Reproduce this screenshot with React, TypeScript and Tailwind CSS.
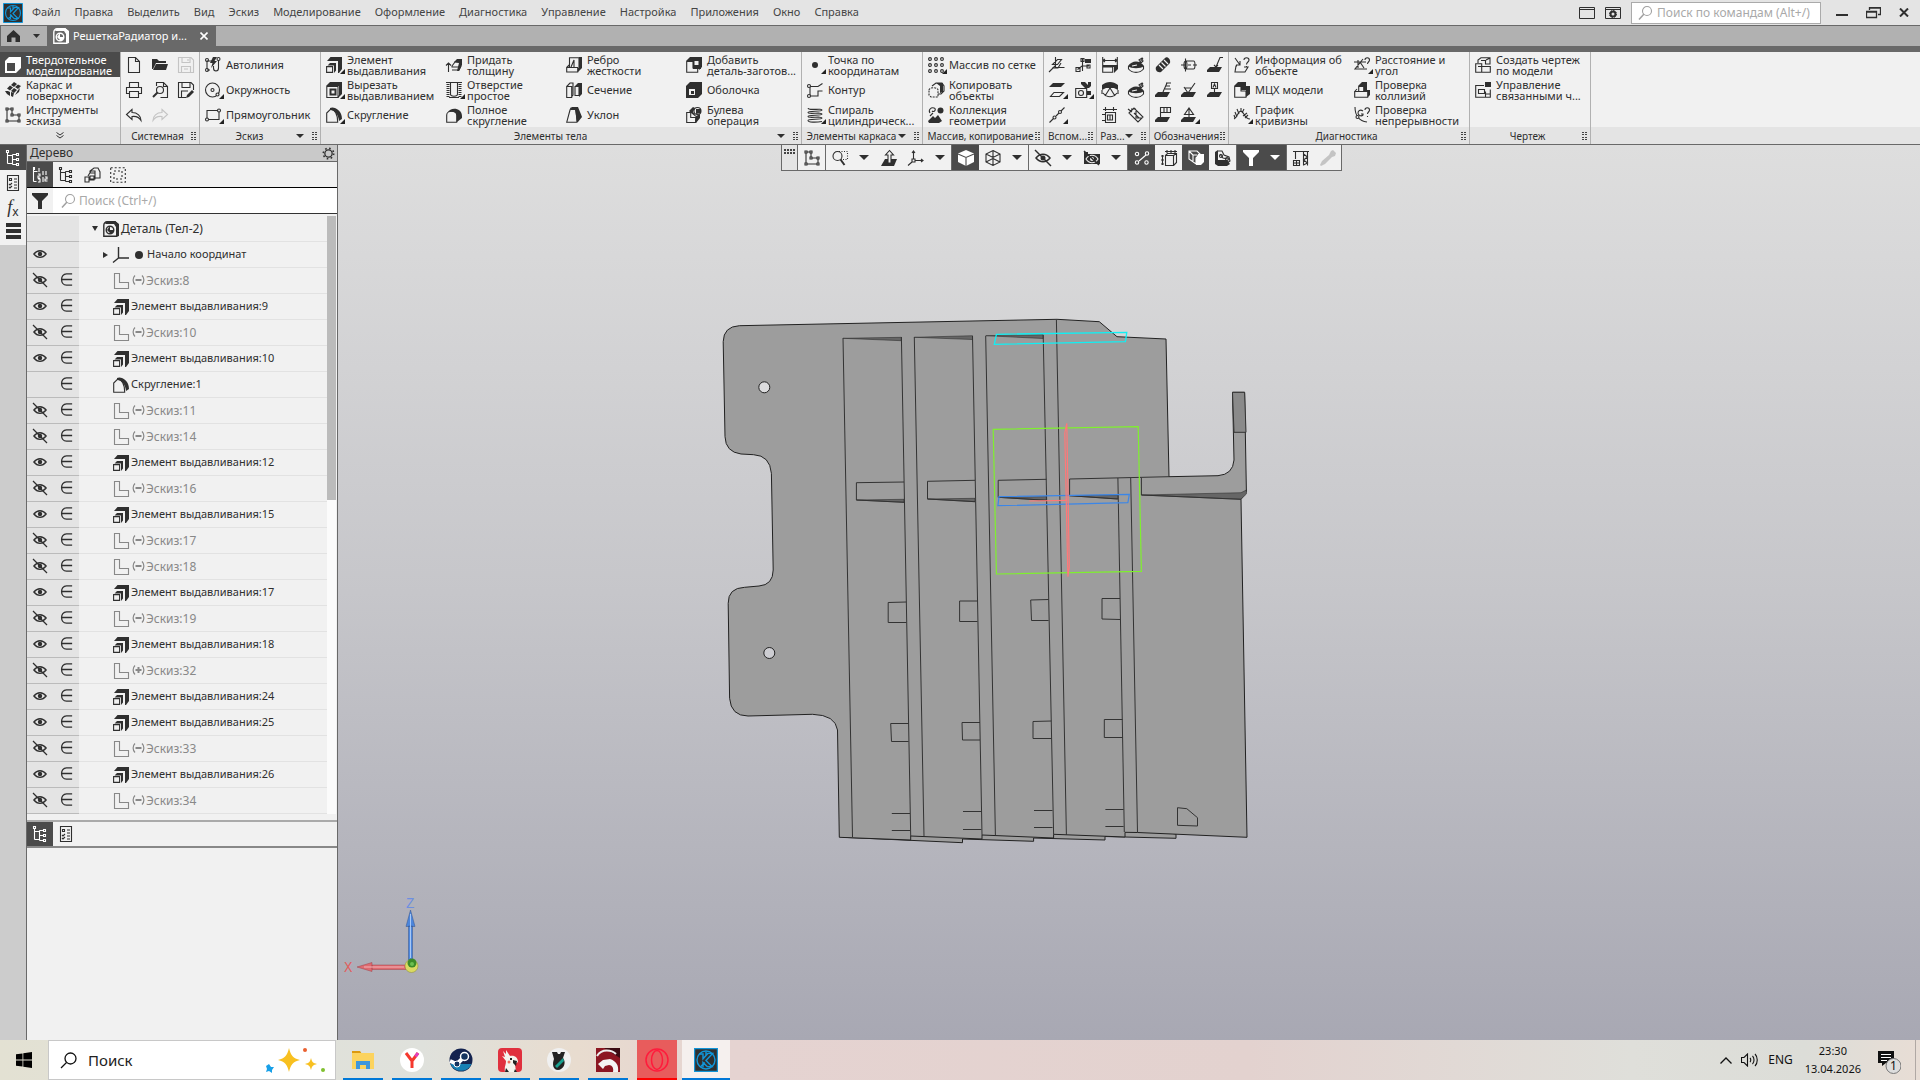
import type { ReactNode } from "react";

const F = { fill: "currentColor", stroke: "none" };

const icons: Record<string, ReactNode> = {
    solid: (
        <>
            <path {...F} d="M0 4L4 0h12v11l-5 5H0z" />
            <path fill="#4b4b4b" stroke="none" d="M2 6h8v8H2z" />
        </>
    ),
    surface: (
        <path
            {...F}
            d="M9 0l3 2-3 3-3-2zM13 2.500l3 1.500-3 3-3-2zM5 3.500l3 2-3 3-3-2zM9 6l3 2-3 3-3-2zM3 9l2 1v4l-3-2-2-3zM6 10l3 1-1 4-2-1zM13 8l2-2-1 4-4 3z"
        />
    ),
    sketch: (
        <>
            <path d="M2 2h5v6h7v6H2z" />
            <path fill="#f1f1f1" d="M1 1h2v2H1zM6 1h2v2H6zM6 7h2v2H6zM13 7h2v2h-2zM13 13h2v2h-2zM1 13h2v2H1z" />
        </>
    ),
    file: <path d="M2.500.5h7l4 4v11h-11zM9.500.5v4h4" />,
    open: <path {...F} d="M0 2h5l2 2h7v2H4L1 12H0zM4 7h12l-2 6H1z" />,
    save: <path d="M.5.500H13l2.500 2.500v12.500H.5zM4 .5v5h8v-5M10 2v2M3.500 15.500v-6h9v6M6 12h4" />,
    print: <path d="M3.500 5V.5h9V5M3.500 11.500h-3V5.500h15v6h-3M3.500 9.500h9v6h-9z" />,
    preview: (
        <>
            <path d="M4.500 4V.5h7l4 4v11h-7M11.500.5v4h4" />
            <circle cx="8" cy="8" r="3.500" />
            <path strokeWidth="2" d="M5.500 10.500L1 15" />
        </>
    ),
    saveAs: (
        <>
            <path d="M8 15.500H.5V.5H13l2.500 2.500V8M4 .5v5h8v-5M3.500 15v-6H10" />
            <path {...F} d="M14 8l2 2-5 5-3 1 1-3z" />
        </>
    ),
    undo: <path d="M6 2.500L.5 7.500l5.500 5v-3c4-.5 7 .5 9 4C15 9 11.500 5.500 6 5.500z" />,
    redo: <path d="M10 2.500l5.500 5-5.500 5v-3c-4-.5-7 .5-9 4C1 9 4.500 5.500 10 5.500z" />,
    autoline: (
        <>
            <path d="M2 12V4h5M13.500 3v8c0 4-5 4-5 0V9M2 13h3" />
            <path {...F} d="M8 0h4L9.500 4H12l-6 7 1.500-5H5z" />
            <circle cx="2" cy="3" r="1.500" />
            <circle cx="2" cy="13" r="1.500" />
            <circle cx="13.500" cy="2" r="1.500" />
        </>
    ),
    circle: (
        <>
            <circle cx="7.500" cy="8" r="7" />
            <circle cx="7.500" cy="8" r="1.500" />
            <circle cx="12.500" cy="12.500" r="1.500" fill="#f1f1f1" />
        </>
    ),
    rect: (
        <>
            <path d="M2 3.500h12v9H2z" />
            <circle cx="2" cy="12.500" r="1.500" fill="#f1f1f1" />
            <circle cx="14" cy="3.500" r="1.500" fill="#f1f1f1" />
        </>
    ),
    extrude: (
        <>
            <path {...F} d="M1 4l3.500-4H16v12l-3 4h-1V4z" />
            <path {...F} d="M1.500 8.500L4 6h6v7.500L8 16V8.500z" />
            <path d="M.6 9.600h6v5.800h-6z" />
        </>
    ),
    cut: (
        <>
            <path {...F} d="M0 4l4-4h12v12l-4 4v-2l1-1V4H1z" />
            <path d="M.8 4.500H12v11H.8z" />
            <path strokeWidth="2" d="M4.500 7.500h5v5h-5z" />
        </>
    ),
    fillet: (
        <>
            <path d="M.7 15.300V6l4-4c5 1 7 5 7 13.300z" />
            <path {...F} d="M4 1c4-2 12 2 12 11l-3 2C12 7 9 3 4 3z" />
        </>
    ),
    thicken: (
        <>
            <path d="M2.500 15V6M0 8.500L2.500 6 5 8.500M6 9l3-4h6l-2 5H6zM6 13h7l2-4" />
            <path {...F} d="M8 5l3-3h5v6l-3 6h-2l2-8z" />
        </>
    ),
    hole: (
        <>
            <path strokeDasharray="1 1" strokeWidth="3" d="M2 0v15M14 0v15" />
            <path d="M0 .5h16M4.500 1v11c0 3 7 3 7 0V1M3 15.500h10" />
        </>
    ),
    fullFillet: (
        <>
            <path d="M.7 15.300V8c0-5 10-5 10 0v7.300z" />
            <path {...F} d="M2 5c2-5 14-5 14 4v2l-5 4V9c0-4-5-5-9-4z" />
        </>
    ),
    rib: (
        <>
            <path d="M3.500 10V.7h9.500V10M.7 10.500h11v4.500H.7zM.7 10.500l3-3M8 10V3L5 10" />
            <path {...F} d="M13 0h3v11l-4 4v-4l1-1z" />
        </>
    ),
    section: (
        <>
            <path d="M.7 4.500h5v11h-5zM.7 4.500L4 1h3v12l-1.500 2M9 4.500h4v9H9z" />
            <path {...F} d="M9 4l3-3h4v11l-3 3V4z" />
        </>
    ),
    draft: (
        <>
            <path d="M.7 15.300L4 3l1-2h5l1 14.300z" />
            <path {...F} d="M4 3l2-3h6l4 10-4 5h-1L9 3z" />
        </>
    ),
    addPart: (
        <>
            <path {...F} d="M0 4l4-4h12v10l-3 3V4z" />
            <path {...F} d="M7 4h8v8H7z" />
            <path fill="#f1f1f1" stroke="none" d="M8.500 4h4v4h-4z" />
            <path d="M.7 4.500v10.800h11V11H7V4.500z" />
        </>
    ),
    shell: (
        <>
            <path {...F} fillRule="evenodd" d="M0 4l4-4h12v12l-4 4H0zm3 3v6h6V7z" />
            <path {...F} d="M5 9h3v3H5z" />
        </>
    ),
    boolean: (
        <>
            <path {...F} d="M3 4l4-4 2 1-2 4 3 4 4-2v4l-4 5-1-2 1-4-5-4z" />
            <circle cx="11.500" cy="4" r="3.500" />
            <path {...F} d="M10 2h5v4l-5 1z" />
            <path d="M.7 5.500h4v5h5v5h-9z" />
        </>
    ),
    point: <circle {...F} cx="8" cy="8" r="3" />,
    contour: (
        <>
            <path d="M15.500 1.500L11 4.500H3v9.500h8V9h4.500" />
            <circle cx="2" cy="4" r="1.500" fill="#f1f1f1" />
            <circle cx="2" cy="14" r="1.500" fill="#f1f1f1" />
        </>
    ),
    spiral: <path d="M1 1c0 3 14 0 14 2S1 3.500 1 5.500s14-.5 14 1.500S1 7.500 1 9.500s14-.5 14 1.500S1 11.500 1 13.500s8 2 14 1" />,
    grid: (
        <>
            {[2, 8, 14].map((x) =>
                [2, 8, 14].map((y) => <circle key={`${x}-${y}`} cx={x} cy={y} r="1.400" />)
            )}
        </>
    ),
    copy: (
        <>
            <path strokeDasharray="2 1" d="M1 8c0-3 9-3 9 0v7H3l-2-2z" />
            <path d="M4 4l4-3h6l2 3v5l-3 3h-3" />
            <path {...F} d="M8 1h7v9l-3 1V4z" />
        </>
    ),
    collection: (
        <>
            <path d="M2 6c-2-3 1-6 4-5s0 5-2 3M2 9l3-3" />
            <circle {...F} cx="12.500" cy="3.500" r="3" />
            <path {...F} d="M0 14l5-5 2 2 3-3 4 6-3 2H1z" />
        </>
    ),
    axisPlane: <path d="M6.500 0v11M0 15L7 8M7 10.500h8.500M3.500 7.500h5l4-5h-4zM3 11h6l3-5" />,
    coord: (
        <>
            <path d="M7.500 14V2M2.500 12.500L7 9h7M1 10.500h4v4H1zM6 1.500h3v3H6zM12 8h3v3h-3z" />
            <path {...F} d="M10 2h6v4h-6z" />
        </>
    ),
    planes: (
        <>
            <path {...F} d="M4 1h12l-4 4H0z" />
            <path d="M5 10.500h9.500l-4 4H1.500z" />
        </>
    ),
    body3: (
        <>
            <path {...F} d="M6 0h4l3 3V0h3v4l-2 2h-4L6 2zM12 9h4v4h-4z" />
            <path d="M.7 6.500h11v9H.7z" />
            <circle cx="6" cy="11" r="2.500" />
        </>
    ),
    lineDots: (
        <>
            <path d="M.5 15.500l4-4M7 9l3-3M12 4l3.500-3.500" />
            <circle cx="5.500" cy="10.500" r="1.500" />
            <circle cx="11" cy="5" r="1.500" />
        </>
    ),
    dimH: (
        <>
            <path d="M.7 0v15.300h10V10H.7M15.300 0v10M1 3.500h14M3 2L1 3.500 3 5M13 2l2 1.500L13 5" />
            <path {...F} d="M1 8h15v4l-4 4V10H1z" />
        </>
    ),
    dimR: (
        <>
            <path {...F} d="M0 9c4-6 12-6 16 0-3 3-13 3-16 0z" />
            <path d="M.5 9v3c4 4.500 11 4.500 15 0V9M9 9l6-8M11 3l3-2 1 3-2 2z" />
            <path stroke="#f1f1f1" d="M4 9l5-1" />
        </>
    ),
    dimA: (
        <>
            <path {...F} d="M0 3c5-4 11-4 16 0v5l-4-2H4L0 8z" />
            <path d="M8 6l-5 8M8 6l5 8M1 11c4 5 10 5 14 0M0 8v4M16 8v4" />
        </>
    ),
    dimL: <path d="M3.500 0v4M11.500 0v4M1 2.500h14M3.500 5.500h10v10h-10zM0 7.500h3M0 13.500h3M5.500 8h5v5h-5zM8 8v5" />,
    dimB: <path d="M1 6l5-5 9 9-5 5zM0 2l4 3M3 2h5M6 6l5 5M8 4v7h6" />,
    thread: (
        <>
            <path {...F} d="M1 10L10 1c2-2 6 1 5 5l-9 9c-4 1-6-2-5-5z" />
            <path stroke="#f1f1f1" d="M4 8l4 4M6.500 5.500l4 4M9 3l4 4" />
        </>
    ),
    cyl: <path d="M4.500 4h8c2 0 2 8 0 8h-8c-2 0-2-8 0-8zM4.500 4c2 0 2 8 0 8M0 8h4M7 8h3M12 8h4M4.500 1.500v13" />,
    mark: (
        <>
            <path {...F} d="M3 10h12l-3 5H0v-2z" />
            <path d="M16 .5h-3L9 10M7 8l2 2 2-2" />
        </>
    ),
    markE: (
        <>
            <path {...F} d="M3 10h12l-3 5H0v-2z" />
            <path d="M16 1H11M11 4h4M16 7H10M12 1L8 10" />
        </>
    ),
    markV: (
        <>
            <path {...F} d="M3 10h12l-3 5H0v-2z" />
            <path d="M3 5l4 6 7-10M4 6h6" />
        </>
    ),
    markA: (
        <>
            <path {...F} d="M3 10h12l-3 5H0v-2z" />
            <path d="M4.500.5h6v6h-6zM7.500 7v3M6 5.500L7.500 2 9 5.500" />
        </>
    ),
    markT: (
        <>
            <path {...F} d="M3 10h12l-3 5H0v-2z" />
            <path d="M5.500 10V.5h10v5h-10M9 .5v5M12 .5v5" />
        </>
    ),
    markD: (
        <>
            <path {...F} d="M3 10h12l-3 5H0v-2z" />
            <path d="M3.500 7.500h9L8 1zM8 2v8" />
        </>
    ),
    info: <path d="M1 1l5 7M6 4v4H2M3 9H2l-1 6h10l3-5h-4M10 3c0-3 5-3 5 0 0 2-2.500 2-2.500 4.500M12.500 9v1" />,
    mass: (
        <>
            <path {...F} d="M0 4l4-4h8v4h4v8l-4 3V8H7V4z" />
            <path d="M.7 4.500H7V9h5v6.300H.7z" />
        </>
    ),
    curvature: <path d="M0 12c3-1 4-8 7-8s3 8 9 8M1 11L0 8M3 10L1 5M5 7L3 2M7 5V1M8 6l2-4M9 9l4-3M11 11l3-3" />,
    distance: <path d="M0 5h4l8 0M4 3v8M9 2L1 12h12M6 5l4 6M11 3c0-3 4.500-3 4.500 0 0 2-2 2-2 4" />,
    collision: (
        <>
            <path {...F} d="M4 4l4-4h5v8h3v5l-2 2V9h-4V4z" />
            <path d="M.7 9.500h4v-5h5v5h4v5.800H.7zM5 9.500h5M.7 9.500L3 7" />
        </>
    ),
    continuity: (
        <>
            <path d="M1 0c0 8 4 14 12 15M9 4c-3-2-5 0-5 2s3 4 5 2V7H7M11 3c0-3 4.500-3 4.500 0 0 2-2 2-2 4M13.500 9v1" />
            <circle cx="3.500" cy="10" r="1.500" fill="#f1f1f1" />
        </>
    ),
    drawing: <path d="M.7 6.700h6v8.600h-6zM6.700 9.500h8.600v5.800H6.700M3 6V3l3-2.300h9V7h-4.500V3.500H6M11 3l4-2M3 9.500h4" />,
    linked: (
        <>
            <path d="M9 3.500H.7v11.800h14.600V7.500M3.500 7.500h6v4h-6zM10.500 9.500v6M10.500 12h5" />
            <path {...F} d="M10 0h6v5h-6z" />
        </>
    ),
    tree: <path d="M2.500 3v10.500M2.500 5.500h5M2.500 13.500h5M7.500 4.500v10M7.500 4.500h4M7.500 9.500h4M7.500 14.500h4M1.500.5h2v2h-2zM11.500 3.500h2v2h-2zM11.500 8.500h2v2h-2zM11.500 13.500h2v2h-2z" />,
    treeNum: <path d="M1.500 3v11.500M1.500 4.500h4M1.500 14.500h3M1.500.5h1v2h-1zM7 1v4M6 7h2v2H6v2h2M6 12h2v3H6M11 4v4M14 4v4M11 10v5M13 10h2v2h-2v2h2.500" />,
    params: <path d="M2.500.5h11v15h-11zM4.500 3.500h2v2h-2zM9 4h3M9 7h3M4 9l1 1 2-2M9 10h3M4 12l1 1 2-2M9 13h3" />,
    treeDocs: <path d="M6 6l0-2 4-3h4l2 4v6h-5V6H6M4 9l3-5h4v8H8M1 10h4v5H1zM5 12h4M6 9h4v4H6z" />,
    dashed: <path strokeDasharray="2 2" d="M.7.700h14.600v14.600H.7zM4 4h8v8H4z" />,
    filter: <path {...F} d="M0 0h16v2l-6 6v8H6V8L0 2z" />,
    search: (
        <>
            <circle cx="10" cy="6" r="4.500" />
            <path strokeWidth="1.500" d="M7 9l-5 5.500" />
        </>
    ),
    part: (
        <>
            <path strokeWidth="1.400" d="M.8 4.500c0-2 1-3.700 3.700-3.700H12l3.200 3v10l-2 1.400H.8z" />
            <path {...F} d="M4 0h8l4 3v12l-3 1V6l-2-3H2z" />
            <circle cx="7" cy="9" r="3.800" strokeWidth="1.400" />
            <path {...F} d="M7 5v4h4l-1 3H7L4 9z" />
        </>
    ),
    partLight: (
        <>
            <path strokeWidth="1.400" d="M.8 4.500c0-2 1-3.700 3.700-3.700H12l3.200 3v10l-2 1.400H.8z" />
            <path {...F} d="M4 0h8l4 3v12l-3 1V6l-2-3H2z" />
            <circle cx="7" cy="9" r="3.800" strokeWidth="1.400" />
            <path {...F} d="M7 5v4h4l-1 3H7L4 9z" />
        </>
    ),
    axes: <path strokeWidth="1.400" d="M5.500 0v11H16M5.500 11L0 15.500" />,
    sk: <path d="M1.500.5h5v9h9v6h-14z" />,
    eye: (
        <>
            <path strokeWidth="1.500" d="M1 8c4-5 10-5 14 0-4 5-10 5-14 0z" />
            <circle {...F} cx="8" cy="8" r="2.500" />
        </>
    ),
    eyeOff: (
        <>
            <path strokeWidth="1.500" d="M1 8c4-5 10-5 14 0-4 5-10 5-14 0z" />
            <circle {...F} cx="8" cy="8" r="2.500" />
            <path strokeWidth="1.400" d="M0 0l16 16" />
        </>
    ),
    member: <path strokeWidth="1.400" d="M14 2H8C1 2 1 14 8 14h6M3 8h11" />,
    gear: (
        <>
            <circle cx="8" cy="8" r="4.500" strokeWidth="1.600" />
            <circle cx="8" cy="8" r="6.400" strokeWidth="2" strokeDasharray="2 3.030" />
        </>
    ),
    zoomArea: (
        <>
            <path strokeDasharray="1 1.500" d="M7 1.500h8.500v8H9" />
            <circle cx="5.500" cy="6" r="4.500" />
            <path strokeWidth="2" d="M8.500 9.500l4 5.500" />
        </>
    ),
    normal: (
        <>
            <path {...F} d="M4 9h12l-3 7H0z" />
            <path fill="#f1f1f1" d="M7 13V5H4.500L8.500.500l4 4.500H10v8z" />
        </>
    ),
    axes3: <path d="M5.500 9V1M4 3l1.500-2L7 3M7 10.500h8M13 9l2 1.500-2 1.500M4 12l-4 3.500M4 9h3v3H4z" />,
    cube: (
        <>
            <path {...F} d="M8 0l8 3.500V12l-8 4-8-4V3.500z" />
            <path stroke="#4b4b4b" d="M0 4l8 3.500L16 4M8 7.500V16" />
        </>
    ),
    wire: <path d="M8 .5l7 3.500v8l-7 3.500L1 12V4zM1 4l7 3.500L15 4M8 7.500v8M8 .5v8L1 12M8 8.500L15 12" />,
    camera: (
        <>
            <path {...F} d="M0 2h4v2H0zM0 4h16v10H0z" />
            <path stroke="#f1f1f1" d="M2 9c3-5 9-5 12 0-3 5-9 5-12 0z" />
            <circle cx="8" cy="9" r="2" fill="#f1f1f1" stroke="none" />
            <path strokeWidth="1.500" d="M0 1l15 14" />
        </>
    ),
    points: (
        <>
            <path d="M5 11l7-6" />
            <circle cx="3" cy="4" r="1.700" />
            <circle cx="13" cy="3.500" r="1.700" />
            <circle cx="3" cy="12.500" r="1.700" />
            <circle cx="12.500" cy="12.500" r="1.700" />
        </>
    ),
    dims: <path d="M4.500 5.500h8v10h-8zM4.500 5.500l2-2h9v9l-3 3M12.500 5.500l3-2M6 0v3M10 0v3M14 0v3M4 1.500h12M0 6h3M0 10h3M0 14h3M1.500 5v10" />,
    bodies: (
        <>
            <path {...F} d="M8 9l2-5h6v8l-3 3H8z" />
            <path d="M1 1h8l3 3-4 4v6L1 9zM1 1l4 4v8M5 5h4" />
        </>
    ),
    corner: (
        <>
            <path {...F} d="M0 2l3-2v10h9l3 4-3 2H3l-3-2z" />
            <path d="M3 1h4l2 4 5 2 1 4-3 2M5 4l3 4 5 1" />
            <circle cx="6" cy="6" r="1.500" />
            <circle cx="12" cy="9" r="1.500" />
        </>
    ),
    crane: <path d="M2.500 1v8M0 1.500h16M.5 10.500h6v5h-6zM3.500 10.500v5M.5 13h6M10.500 1v14.500M14.500 1v14.500M10.500 4l4 3-4 3 4 3-4 2" />,
    dropper: <path {...F} d="M11 1l2-1 3 3-1 3-3 1-7 7-4 2-1-1 2-4 7-6z" />,
};

function Icon({ name, size = 16, className = "" }: { name: string; size?: number; className?: string }) {
    return (
        <svg
            width={size}
            height={size}
            viewBox="0 0 16 16"
            fill="none"
            stroke="currentColor"
            strokeWidth="1.100"
            className={`shrink-0 overflow-visible ${className}`}
            aria-hidden="true">
            {icons[name]}
        </svg>
    );
}

const Arrow = () => (
    <svg width="10" height="5" viewBox="0 0 10 5" className="shrink-0" aria-hidden="true">
        <path fill="currentColor" d="M0 0h10L5 5z" />
    </svg>
);

const Grip = () => (
    <svg width="5" height="9" viewBox="0 0 5 9" className="shrink-0" aria-hidden="true">
        <path fill="#444" d="M0 0h2v1H0zM3 0h2v1H3zM0 2h2v1H0zM3 2h2v1H3zM0 5h2v1H0zM3 5h2v1H3zM0 7h2v1H0zM3 7h2v1H3z" />
    </svg>
);

const KLogo = ({ size }: { size: number }) => (
    <svg width={size} height={size} viewBox="0 0 20 20" fill="none" aria-hidden="true" className="shrink-0">
        <path fill="#303030" stroke="#1295d8" d="M.5.500h19v19H.5z" />
        <circle cx="10" cy="10" r="7.500" stroke="#1295d8" strokeWidth="1.200" />
        <path stroke="#1295d8" strokeWidth="1.200" d="M4.500 5h3v4l4-4.500h4L10 10.500l5 5h-4L7.500 12v4M10 3v3M5 16l4-4" />
    </svg>
);

type Tool = { icon: string; text?: string[]; more?: boolean; off?: boolean };

const t = (icon: string, text: string, more = false): Tool => ({ icon, text: text.split("|"), more });
const s = (icon: string, more = false, off = false): Tool => ({ icon, more, off });

const groups: { label: string; arrow?: boolean; tools: Tool[] }[] = [
    {
        label: "Системная",
        tools: [s("file"), s("print"), s("undo"), s("open"), s("preview"), s("redo", false, true), s("save", false, true), s("saveAs")],
    },
    {
        label: "Эскиз",
        arrow: true,
        tools: [t("autoline", "Автолиния"), t("circle", "Окружность", true), t("rect", "Прямоугольник", true)],
    },
    {
        label: "Элементы тела",
        arrow: true,
        tools: [
            t("extrude", "Элемент|выдавливания", true),
            t("cut", "Вырезать|выдавливанием", true),
            t("fillet", "Скругление", true),
            t("thicken", "Придать|толщину"),
            t("hole", "Отверстие|простое", true),
            t("fullFillet", "Полное|скругление"),
            t("rib", "Ребро|жесткости"),
            t("section", "Сечение"),
            t("draft", "Уклон"),
            t("addPart", "Добавить|деталь-заготов..."),
            t("shell", "Оболочка"),
            t("boolean", "Булева|операция"),
        ],
    },
    {
        label: "Элементы каркаса",
        arrow: true,
        tools: [t("point", "Точка по|координатам", true), t("contour", "Контур"), t("spiral", "Спираль|цилиндрическ...", true)],
    },
    {
        label: "Массив, копирование",
        tools: [t("grid", "Массив по сетке", true), t("copy", "Копировать|объекты"), t("collection", "Коллекция|геометрии")],
    },
    {
        label: "Вспом...",
        tools: [s("axisPlane"), s("planes", true), s("lineDots", true), s("coord"), s("body3", true)],
    },
    {
        label: "Раз...",
        arrow: true,
        tools: [s("dimH"), s("dimA"), s("dimL"), s("dimR"), s("dimR"), s("dimB")],
    },
    {
        label: "Обозначения",
        tools: [s("thread"), s("markE"), s("markT"), s("cyl"), s("markV"), s("markD", true), s("mark"), s("markA")],
    },
    {
        label: "Диагностика",
        tools: [
            t("info", "Информация об|объекте"),
            t("mass", "МЦХ модели"),
            t("curvature", "График|кривизны", true),
            t("distance", "Расстояние и|угол", true),
            t("collision", "Проверка|коллизий"),
            t("continuity", "Проверка|непрерывности"),
        ],
    },
    {
        label: "Чертеж",
        tools: [t("drawing", "Создать чертеж|по модели"), t("linked", "Управление|связанными ч...")],
    },
];

const modes = [
    { icon: "solid", text: ["Твердотельное", "моделирование"] },
    { icon: "surface", text: ["Каркас и", "поверхности"] },
    { icon: "sketch", text: ["Инструменты", "эскиза"] },
];

const menu = [
    "Файл", "Правка", "Выделить", "Вид", "Эскиз", "Моделирование", "Оформление",
    "Диагностика", "Управление", "Настройка", "Приложения", "Окно", "Справка",
];

const rows = [
    "s-8", "e9", "s-10", "e10", "f1", "s-11", "s-14", "e12", "s-16", "e15", "s-17",
    "s-18", "e17", "s-19", "e18", "s+32", "e24", "e25", "s-33", "e26", "s-34",
];

const Lines = ({ text }: { text: string[] }) => (
    <span className="flex flex-col items-start whitespace-nowrap text-left leading-[11px]">
        {text.map((line) => (
            <span key={line}>{line}</span>
        ))}
    </span>
);

const MenuBar = () => (
    <header className="flex h-[26px] items-center border-b border-[#696969] bg-[#e4e4e4] pl-[3px] text-[#444]">
        <KLogo size={20} />
        <nav className="ml-[9px] flex gap-[14px] whitespace-nowrap">
            {menu.map((item) => (
                <button key={item}>{item}</button>
            ))}
        </nav>
        <div className="ml-auto flex items-center text-[#2f2f2f]">
            <button aria-label="Окно" className="mr-[10px]">
                <svg width="16" height="12" fill="none" stroke="currentColor">
                    <path d="M.5.500h15v11H.5zM.5 2.500h15" />
                </svg>
            </button>
            <button aria-label="Параметры окна" className="mr-[10px]">
                <svg width="16" height="12" fill="none" stroke="currentColor">
                    <path d="M.5.500h15v11H.5zM.5 2.500h15" />
                    <circle cx="8" cy="7" r="2.500" strokeWidth="2" />
                    <circle cx="8" cy="7" r="3.500" strokeDasharray="1.500 1.200" />
                </svg>
            </button>
            <label className="flex h-[22px] w-[190px] items-center border border-[#aaa] bg-white pl-[5px] text-xs text-[#a0a0a0]">
                <Icon name="search" />
                <input
                    aria-label="Поиск по командам"
                    placeholder="Поиск по командам (Alt+/)"
                    className="ml-1 w-full min-w-0 bg-transparent outline-none placeholder:text-[#a9a9a9]"
                />
            </label>
            <button aria-label="Свернуть" className="ml-[15px] flex h-5 w-[12px] items-center">
                <span className="mt-1 h-[2px] w-full bg-[#2f2f2f]" />
            </button>
            <button aria-label="Восстановить" className="ml-[18px]">
                <svg width="15" height="12" fill="none" stroke="currentColor">
                    <path d="M3.500 3V.5h11v7H12M.5 4.500h10v6H.5zM.5 5h10M3.500 1h11" strokeWidth="1.300" />
                </svg>
            </button>
            <button aria-label="Закрыть" className="ml-[18px] mr-[11px]">
                <svg width="10" height="9" stroke="currentColor" strokeWidth="2">
                    <path d="M1 .5l8 8M9 .5l-8 8" />
                </svg>
            </button>
        </div>
    </header>
);

const TabStrip = () => (
    <div className="flex h-[26px] border-b-6 border-[#696969] bg-[#b1b1b1]">
        <div className="flex w-12 items-center border-x border-[#696969] pl-[6px] text-[#2f2f2f]">
            <button aria-label="Главная">
                <svg width="13" height="12" viewBox="0 0 13 12" fill="currentColor">
                    <path d="M0 6L6.500 0 13 6v6H8.500V7.500h-4V12H0z" />
                </svg>
            </button>
            <button aria-label="Список документов" className="ml-[13px]">
                <svg width="7" height="4" fill="currentColor">
                    <path d="M0 0h7L3.500 4z" />
                </svg>
            </button>
        </div>
        <div className="flex w-[168px] items-center bg-[#696969] pl-[5px] text-white">
            <Icon name="partLight" />
            <span className="ml-1 whitespace-nowrap">РешеткаРадиатор и...</span>
            <button aria-label="Закрыть вкладку" className="ml-auto mr-2">
                <svg width="8" height="8" stroke="currentColor" strokeWidth="1.600">
                    <path d="M.5.500l7 7M7.500.500l-7 7" />
                </svg>
            </button>
        </div>
    </div>
);

const ToolButton = ({ tool }: { tool: Tool }) => (
    <button
        className={`relative flex h-[25px] items-center pl-[5px] ${tool.off ? "text-[#c4c4c4]" : ""} ${tool.text ? "w-[120px]" : "w-[26px]"}`}>
        <Icon name={tool.icon} />
        {tool.more && (
            <svg width="5" height="5" className="absolute bottom-[3px] left-[19px]" fill="#222">
                <path d="M5 0v5H0z" />
            </svg>
        )}
        {tool.text && (
            <span className="ml-[5px]">
                <Lines text={tool.text} />
            </span>
        )}
    </button>
);

const Ribbon = () => (
    <div className="flex h-[93px] border-b border-[#696969] bg-[#f1f1f1]">
        <div className="flex w-[121px] shrink-0 flex-col border-r border-[#b1b1b1]">
            {modes.map((m, i) => (
                <button
                    key={m.icon}
                    className={`flex h-[25px] items-center pl-[5px] ${i === 0 ? "bg-[#4b4b4b] text-white" : ""}`}>
                    <Icon name={m.icon} />
                    <span className="ml-[5px]">
                        <Lines text={m.text} />
                    </span>
                </button>
            ))}
            <button aria-label="Показать все наборы" className="flex flex-1 items-center justify-center bg-[#e4e4e4]">
                <svg width="8" height="7" fill="none" stroke="#333">
                    <path d="M.5.500L4 3 7.500.500M.5 3.500L4 6l3.500-2.500" />
                </svg>
            </button>
        </div>
        {groups.map((g) => (
            <section key={g.label} className="flex shrink-0 flex-col border-r border-[#b1b1b1]">
                <div className="grid h-[75px] grid-flow-col grid-rows-3 justify-start">
                    {g.tools.map((tool, i) => (
                        <ToolButton key={i} tool={tool} />
                    ))}
                </div>
                <div className="flex flex-1 items-center bg-[#e4e4e4] pr-[3px] pt-px text-[10px]">
                    <span className="w-0 flex-1 whitespace-nowrap pl-[3px] text-center">{g.label}</span>
                    {g.arrow && (
                        <svg width="8" height="4" fill="currentColor" className="mr-2 shrink-0">
                            <path d="M0 0h8L4 4z" />
                        </svg>
                    )}
                    <Grip />
                </div>
            </section>
        ))}
        <div className="flex flex-1 flex-col justify-end">
            <div className="h-[17px] bg-[#e4e4e4]" />
        </div>
    </div>
);

const SideRail = () => (
    <aside className="w-[27px] shrink-0 border-r border-[#696969] bg-[#ccc]">
        <div className="flex flex-col bg-[#f1f1f1]">
            <button aria-label="Дерево" className="flex h-[25px] items-center justify-center bg-[#4b4b4b] text-white">
                <Icon name="tree" />
            </button>
            <button aria-label="Параметры" className="flex h-[25px] items-center justify-center">
                <Icon name="params" />
            </button>
            <button aria-label="Переменные" className="flex h-[25px] items-center justify-center">
                <span className="font-['Liberation_Serif',serif] text-lg leading-none italic">
                    f<sub className="font-['Noto_Sans',sans-serif] text-xs not-italic">x</sub>
                </span>
            </button>
            <button aria-label="Список" className="flex h-[25px] flex-col items-center gap-[2px] pt-[3px]">
                <span className="h-1 w-[15px] bg-[#2f2f2f]" />
                <span className="h-1 w-[15px] bg-[#2f2f2f]" />
                <span className="h-1 w-[15px] bg-[#2f2f2f]" />
            </button>
        </div>
    </aside>
);

const TreeRow = ({ row }: { row: string }) => {
    const sketch = row[0] === "s";
    const extrude = row[0] === "e";
    return (
        <li className="flex h-[26px]">
            <div className="flex w-[52px] items-center border-b border-[#bbb] bg-[#e4e4e4] pb-[2px] pl-[6px]">
                <button aria-label="Видимость" className="h-[14px] w-[14px]">
                    {row[0] !== "f" && <Icon name={sketch ? "eyeOff" : "eye"} size={14} />}
                </button>
                <button aria-label="Включение" className="ml-3 h-[15px] w-[15px]">
                    <Icon name="member" size={15} />
                </button>
            </div>
            <div className={`flex flex-1 items-center whitespace-nowrap border-b border-[#e2e2e2] pl-[34px] ${sketch ? "text-[#888]" : ""}`}>
                <Icon name={sketch ? "sk" : extrude ? "extrude" : "fillet"} />
                {sketch ? (
                    <>
                        <svg width="13" height="11" fill="none" stroke="currentColor" className="ml-[3px] shrink-0">
                            <path strokeWidth="1.200" d="M3 .5c-2.500 2.500-2.500 6.500 0 9M10 .5c2.500 2.500 2.500 6.500 0 9" />
                            <path strokeWidth="2" d={row[1] === "+" ? "M3.500 5h6M6.500 2v6" : "M3.500 5h6"} />
                        </svg>
                        <span className="ml-px text-xs">Эскиз:{row.slice(2)}</span>
                    </>
                ) : (
                    <span className="ml-[2px]">
                        {extrude ? "Элемент выдавливания:" : "Скругление:"}
                        {row.slice(1)}
                    </span>
                )}
            </div>
        </li>
    );
};

const treeTabs = [
    { icon: "treeNum", label: "По порядку" },
    { icon: "tree", label: "Структура" },
    { icon: "treeDocs", label: "Связи" },
    { icon: "dashed", label: "Область" },
];

const TreePanel = () => (
    <section className="flex w-[311px] shrink-0 flex-col border-r border-[#696969] bg-[#f1f1f1]">
        <div className="flex h-[17px] items-center justify-between border-b border-[#696969] bg-[#c9c9c9] pl-[3px] pr-[2px]">
            <h2 className="text-xs">Дерево</h2>
            <button aria-label="Настройка панели">
                <Icon name="gear" size={13} />
            </button>
        </div>
        <div className="flex h-[26px] border-b border-black">
            {treeTabs.map((tab, i) => (
                <button
                    key={tab.icon}
                    aria-label={tab.label}
                    className={`flex w-[26px] items-center justify-center ${i === 0 ? "bg-[#4b4b4b] text-white" : ""}`}>
                    <Icon name={tab.icon} />
                </button>
            ))}
        </div>
        <div className="flex h-[26px] border-b border-[#333] bg-white">
            <button aria-label="Фильтр" className="flex w-[26px] items-center justify-center bg-[#f1f1f1]">
                <Icon name="filter" />
            </button>
            <label className="flex flex-1 items-center pl-[7px] text-xs text-[#a0a0a0]">
                <Icon name="search" />
                <input
                    aria-label="Поиск"
                    placeholder="Поиск (Ctrl+/)"
                    className="ml-[3px] w-full bg-transparent outline-none placeholder:text-[#a9a9a9]"
                />
            </label>
        </div>
        <div className="mt-[2px] flex">
            <ul className="min-w-0 flex-1">
                <li className="flex h-[26px]">
                    <div className="w-[52px] border-b border-[#bbb] bg-[#e4e4e4]" />
                    <div className="flex flex-1 items-center border-b border-[#e2e2e2] pl-[13px]">
                        <svg width="6" height="5" fill="currentColor">
                            <path d="M0 0h6L3 5z" />
                        </svg>
                        <Icon name="part" className="ml-[5px]" />
                        <span className="ml-[2px] text-xs">Деталь (Тел-2)</span>
                    </div>
                </li>
                <li className="flex h-[26px]">
                    <div className="flex w-[52px] items-center border-b border-[#bbb] bg-[#e4e4e4] pb-[2px] pl-[6px]">
                        <button aria-label="Видимость">
                            <Icon name="eye" size={14} />
                        </button>
                    </div>
                    <div className="flex flex-1 items-center border-b border-[#e2e2e2] pl-[24px]">
                        <svg width="5" height="6" fill="currentColor">
                            <path d="M0 0v6l5-3z" />
                        </svg>
                        <Icon name="axes" className="ml-[5px]" />
                        <span className="ml-[6px] h-2 w-2 rounded-full bg-[#2f2f2f]" />
                        <span className="ml-1">Начало координат</span>
                    </div>
                </li>
                {rows.map((row) => (
                    <TreeRow key={row} row={row} />
                ))}
            </ul>
            <div className="mr-px w-[9px] bg-[#fbfbfb]">
                <div className="h-[284px] bg-[#bbb]" />
            </div>
        </div>
        <div className="mt-[6px] flex h-[28px] border-y-2 border-t-[#aaa] border-b-[#888]">
            <button aria-label="Структура" className="flex w-[26px] items-center justify-center bg-[#4b4b4b] text-white">
                <Icon name="tree" />
            </button>
            <button aria-label="Свойства" className="flex w-[26px] items-center justify-center">
                <Icon name="params" />
            </button>
        </div>
    </section>
);

const ViewCell = ({ icon, dark, off }: { icon: string; dark?: boolean; off?: boolean }) => (
    <button
        aria-label={icon}
        className={`flex w-[27px] items-center justify-center ${dark ? "bg-[#4b4b4b] text-white" : ""} ${off ? "text-[#c4c4c4]" : ""}`}>
        <Icon name={icon} />
    </button>
);

const ViewArrow = ({ dark }: { dark?: boolean }) => (
    <button aria-label="Ещё" className={`flex w-[22px] items-center justify-center ${dark ? "bg-[#4b4b4b] text-white" : ""}`}>
        <Arrow />
    </button>
);

const Sep = () => <span className="w-px bg-[#696969]" />;

const ViewToolbar = () => (
    <div className="absolute left-[443px] top-0 flex h-[26px] border border-t-0 border-[#696969] bg-[#f1f1f1]">
        <div className="flex w-[15px] justify-center bg-[#e4e4e4] pt-1">
            <svg width="11" height="5" stroke="#444" strokeWidth="2" strokeDasharray="2 1">
                <path d="M0 1h11M0 4h11" />
            </svg>
        </div>
        <Sep />
        <ViewCell icon="sketch" />
        <Sep />
        <ViewCell icon="zoomArea" />
        <ViewArrow />
        <ViewCell icon="normal" />
        <ViewCell icon="axes3" />
        <ViewArrow />
        <Sep />
        <ViewCell icon="cube" dark />
        <ViewCell icon="wire" />
        <ViewArrow />
        <Sep />
        <ViewCell icon="eyeOff" />
        <ViewArrow />
        <ViewCell icon="camera" />
        <ViewArrow />
        <Sep />
        <ViewCell icon="points" dark />
        <ViewCell icon="dims" />
        <ViewCell icon="bodies" dark />
        <ViewCell icon="corner" />
        <Sep />
        <ViewCell icon="filter" dark />
        <ViewArrow dark />
        <Sep />
        <ViewCell icon="crane" />
        <ViewCell icon="dropper" off />
    </div>
);

const edges = [
    "M843 338L852.500 837", "M901.400 337L910.700 836", "M914.300 337L924 836.500", "M972.500 336L982 835",
    "M985.700 336L995.400 835.500", "M1043.200 335L1053.600 834", "M1056.400 320L1066.400 835",
    "M1117.900 478L1124.300 832", "M1130.700 478L1137.500 832.500",
];

const slots = [
    "M904 482L856.400 482.700V500L904 502.300", "M975 480.300L927.500 481.300V499L975 501.700",
    "M1046.400 479.300L998.200 480.300V497.300L1046.400 500.300", "M1169 476.700L1069.600 479V495.700L1117.900 499",
    "M1141.400 477.700V495L1241 499.300",
    "M906.400 602L888.200 602.500V622.500H906.400", "M977.500 601H959.600V621.500H977.500",
    "M1048.600 599.500L1030.700 600L1031.500 620.500H1048.600", "M1120 598.500H1102V619L1120 619.500",
    "M908.600 723.500H890.700L891.500 741.500H908.600", "M980 722.500H962L962.500 740H980",
    "M1051.400 721L1033 721.500V738.500H1051.400", "M1122.500 719.500H1104.300V737.500H1122.500",
    "M891.800 813.500H910M891.800 830.500H910", "M963 811.500H981.400M963 829.500H981.400",
    "M1034 810.500H1052.500M1034 827.500H1052.500", "M1105.400 809.500H1123.600M1105.400 826.500H1123.600",
    "M1177.500 807.700L1186.800 808.700L1197.500 817.700V826L1177.500 825.300z",
];

const slivers = [
    "M843 338.300L901.400 337.300V340.700z", "M914.300 337.300L972.500 335.700V339.500z", "M985.700 335.700L1043.200 334.700V338.500z",
    "M856.400 500L904 499.300V502.300z", "M927.500 499L975 498.300V501.700z", "M998.200 497.300L1046.400 496.600V500.300z",
    "M1069.600 495.700L1117.900 495V499z", "M1141.400 495L1241 492.700L1246.400 490V494L1241 499.300z",
];

const Model = () => (
    <svg
        width="560"
        height="560"
        viewBox="700 300 560 560"
        fill="none"
        className="absolute left-[362px] top-[155px]"
        aria-label="Деталь">
        <g fill="#9d9d9d" stroke="#222">
            <path d="M843 837.300L962.500 842.700V839L1033.600 841.300V838L1105 840V836.500L1176 838.300V834L1137 828H845z" />
            <path d="M723.200 341.700Q723.500 326.500 739.300 325.700L1057 319.300L1099.300 321.700L1117 336.700L1166 339L1169 476.700L1218 475.700Q1233 474.500 1234 460L1232.500 392.300H1244.600L1246.400 491.700L1241 499.300L1247 837.300L1137.500 832.500L1125 832.300V837L1053.600 834.300V838L982 835V839L910.700 836V840L839.300 837.300L837.500 730Q835.500 715 812.500 714.300L748 716Q731 716 729.600 698.300L728.200 603.300Q728 588 744.600 587.300L759 586Q773 585 773.200 570L771.400 473.300Q770 455.500 753.600 454.700L741 454Q725.500 452 725 436.700z" />
        </g>
        <path fill="#8a8a8a" stroke="#333" d="M1232.500 392.300H1244.600L1246 432.300H1234z" />
        <g fill="#666" stroke="#222" strokeWidth=".5">
            {slivers.map((d) => (
                <path key={d} d={d} />
            ))}
        </g>
        <g stroke="#333">
            {edges.concat(slots).map((d) => (
                <path key={d} d={d} />
            ))}
        </g>
        <circle cx="764.300" cy="387.300" r="5.500" fill="#dcdcde" stroke="#222" />
        <circle cx="769.300" cy="653" r="5.500" fill="#cdcdd2" stroke="#222" />
        <path stroke="#10f0f4" strokeWidth="1.300" d="M996.400 334.300L1126.800 332.300L1125.400 341.700L994.300 344.300z" />
        <path stroke="#7ff02e" strokeWidth="1.200" d="M993.200 429.300L1138.200 426.700L1141.400 571.300L996.400 574z" />
        <path stroke="#3b86e8" strokeWidth="1.200" d="M999 496.700L1129.300 494.300L1127.900 502.700L997.900 505.700z" />
        <path stroke="#ff7878" strokeWidth="1.200" d="M1066.800 423.300L1064.800 433L1067.900 576.700L1069.300 566.700zM1029.300 501L1067 500.300" />
    </svg>
);

const Gizmo = () => (
    <svg width="90" height="90" viewBox="338 895 90 90" className="absolute bottom-[55px] left-0" aria-hidden="true">
        <text x="406" y="908" fill="#6e8fe0" className="font-['Liberation_Mono',monospace] text-sm">Z</text>
        <text x="344" y="972" fill="#e06060" className="font-['Liberation_Mono',monospace] text-sm">X</text>
        <path fill="#4c86dc" stroke="#36548c" strokeWidth=".5" d="M408.500 926h4v34h-4zM410.500 910l4.500 16.500h-9z" />
        <path stroke="#a8c8f5" d="M410.500 914v44" />
        <path fill="#de6a70" stroke="#a04048" strokeWidth=".5" d="M372 965h34v4.500h-34zM357 967l15-4.500v9z" />
        <path stroke="#f3b4b8" d="M364 967h40" />
        <circle cx="411.500" cy="966" r="6.500" fill="#dada62" stroke="#8f8f30" strokeWidth=".5" />
        <circle cx="412" cy="963" r="4.500" fill="#3c8c28" />
        <circle cx="412" cy="964" r="2" fill="#6cc050" />
    </svg>
);

const apps: { name: string; art: ReactNode }[] = [
    {
        name: "Проводник",
        art: (
            <>
                <path fill="#dc9a10" d="M1 3h8l2 3H1z" />
                <path fill="#fcd35e" d="M1 5h22v16H1z" />
                <path fill="#3f97dc" d="M5 13h14v8h-4v-4H9v4H5z" />
            </>
        ),
    },
    {
        name: "Яндекс",
        art: (
            <>
                <circle cx="12" cy="12" r="12" fill="#fff" />
                <path fill="none" stroke="#f5382e" strokeWidth="3" d="M6 5l6 8 6-8M12 12v8" />
                <path fill="none" stroke="#e040c0" strokeWidth="3" d="M15.500 8.500L18 5" />
            </>
        ),
    },
    {
        name: "Steam",
        art: (
            <>
                <circle cx="12" cy="12" r="11.500" fill="#14234f" />
                <path fill="#1680b4" d="M1.500 16a11.500 11.500 0 0 0 21 0z" />
                <path stroke="#fff" strokeWidth="4" d="M1 13l7 3 6-6" fill="none" />
                <circle cx="15.500" cy="8.500" r="4" fill="#14335f" stroke="#fff" strokeWidth="1.500" />
                <circle cx="8" cy="16" r="3" fill="#14335f" stroke="#fff" />
            </>
        ),
    },
    {
        name: "Какаду",
        art: (
            <>
                <rect width="24" height="24" rx="4" fill="#e0303e" />
                <path fill="#f4f4ee" d="M5 3l3 3 0-4 4 6c5-1 8 2 8 6l-3 2 1 8H7c-1-5 1-7 1-11L4 8l3 1z" />
                <path fill="#222" d="M15 12l4 1-1 5-3-3zM12 10h2v2h-2zM7 24l1-4 3 4zM16 24l1-3 2 3z" />
                <circle cx="11" cy="14" r="1.500" fill="#f0705c" />
            </>
        ),
    },
    {
        name: "Маска",
        art: (
            <>
                <circle cx="12" cy="12" r="12" fill="#f0f0f0" />
                <path fill="#222" d="M5 4h5l1 2h2l1-2h4l-2 6c4 5 0 12-5 12-5 0-6-6-4-11z" />
                <path fill="#18a090" d="M8 18l8-8 1 3-7 7z" />
            </>
        ),
    },
    {
        name: "Дракон",
        art: (
            <>
                <path fill="#8c1622" d="M0 0h24v24H0z" />
                <path fill="#3c0c14" d="M8 0h16v10z" />
                <path fill="none" stroke="#eee" strokeWidth="2" d="M1 8C6 0 16 2 20 6" />
                <path fill="#f4f4f4" d="M2 16l5-4 7-1c6 2 9 6 8 13h-5c1-4-1-7-4-7l-4 1-2 3-2-2z" />
            </>
        ),
    },
    {
        name: "Opera",
        art: (
            <g fill="none" stroke="#ff1b3c" strokeWidth="1.500">
                <circle cx="12" cy="12" r="11" />
                <ellipse cx="12" cy="12" rx="5.500" ry="9.500" />
            </g>
        ),
    },
];

const Taskbar = () => (
    <footer className="flex h-10 items-stretch bg-[linear-gradient(90deg,#e3e1d3_0%,#dfe1dc_22%,#e8dccf_30%,#e5d3d1_38%,#e3d2cf_65%,#dfdfda_85%,#dcddd8_94%,#e8ddd5_100%)] text-[#111]">
        <button aria-label="Пуск" className="flex w-12 items-center justify-center">
            <svg width="16" height="16" fill="#000">
                <path d="M0 2.300L6.500 1.400v6.200H0zM7.300 1.300L16 0v7.600H7.300zM0 8.400h6.500v6.200L0 13.700zM7.300 8.400H16V16l-8.700-1.300z" />
            </svg>
        </button>
        <label className="flex w-[288px] items-center border border-[#c8c8c8] bg-white pl-[11px]">
            <svg width="17" height="17" fill="none" stroke="#111" strokeWidth="1.300" className="shrink-0">
                <circle cx="10.500" cy="6.500" r="5.500" />
                <path d="M6.500 10.500L1 16" />
            </svg>
            <input
                aria-label="Поиск в системе"
                placeholder="Поиск"
                className="ml-[11px] w-0 flex-1 bg-transparent text-[15px] outline-none placeholder:text-[#222]"
            />
            <svg width="62" height="26" className="mr-2 shrink-0" aria-hidden="true">
                <path fill="#f8c020" d="M24 1c2 8 4 10 11 12-7 2-9 4-11 12-2-8-4-10-11-12 7-2 9-4 11-12z" />
                <path fill="#f8c020" d="M46 11c1 4 2 5 6 6-4 1-5 2-6 6-1-4-2-5-6-6 4-1 5-2 6-6z" />
                <path fill="#18a0e8" d="M4 17l2 3 3 0-2 3 0 3-3-2-3 1 1-3-1-3z" />
                <circle cx="40" cy="3" r="2" fill="#ea6030" />
                <circle cx="58" cy="23" r="2" fill="#80c030" />
            </svg>
        </label>
        <nav className="ml-[2px] flex">
            {apps.map((app, i) => (
                <button key={app.name} aria-label={app.name} className="flex w-[49px] justify-center">
                    <span
                        className={`flex h-full w-10 items-center justify-center border-b-2 pt-[2px] ${i === 6 ? "border-[#f00] bg-[#e85c5c]" : "border-[#0078d7]"}`}>
                        <svg width="24" height="24" viewBox="0 0 24 24" aria-hidden="true">
                            {app.art}
                        </svg>
                    </span>
                </button>
            ))}
            <button
                aria-label="КОМПАС-3D"
                className="ml-px flex w-12 items-center justify-center border-b-2 border-[#0078d7] bg-[#f5f0ee] pt-[2px]">
                <KLogo size={24} />
            </button>
        </nav>
        <div className="ml-auto flex items-center text-xs">
            <button aria-label="Скрытые значки">
                <svg width="12" height="7" fill="none" stroke="#111" strokeWidth="1.300">
                    <path d="M.5 6.500L6 1l5.500 5.500" />
                </svg>
            </button>
            <button aria-label="Громкость" className="ml-[9px]">
                <svg width="17" height="14" fill="none" stroke="#111" strokeWidth="1.100">
                    <path d="M.5 4.500H3L6.500 1v12L3 9.500H.5zM9 5c1 1 1 3 0 4M11.500 3c2 2 2 6 0 8M14 1c3 3 3 9 0 12" />
                </svg>
            </button>
            <button className="ml-[10px]">ENG</button>
            <button className="ml-3 flex flex-col items-center text-[11px] leading-[18px]">
                <span>23:30</span>
                <span>13.04.2026</span>
            </button>
            <button aria-label="Уведомления" className="ml-4 flex h-full items-center border-r border-[#b0a8a4] pr-[14px] pt-1">
                <svg width="24" height="28" aria-hidden="true">
                    <path fill="#111" d="M1 3h16v12H9l-4 3v-3H1z" />
                    <path stroke="#fff" d="M4 6.500h10M4 9.500h10M4 12.500h6" />
                    <circle cx="16.500" cy="18" r="7.500" fill="#ddd" stroke="#777" />
                    <text x="13" y="22" className="text-xs" fill="#111">1</text>
                </svg>
            </button>
            <span className="w-1" />
        </div>
    </footer>
);

export default function App() {
    return (
        <div className="flex min-h-screen flex-col overflow-hidden bg-[#f1f1f1] font-['Noto_Sans',sans-serif] text-[11px] text-[#2f2f2f]">
            <MenuBar />
            <TabStrip />
            <Ribbon />
            <div className="flex flex-1">
                <SideRail />
                <TreePanel />
                <main className="relative flex-1 overflow-hidden bg-linear-to-b from-[#dedede] via-[#c6c6ca] to-[#a8a8b3]">
                    <ViewToolbar />
                    <Model />
                    <Gizmo />
                </main>
            </div>
            <Taskbar />
        </div>
    );
}
